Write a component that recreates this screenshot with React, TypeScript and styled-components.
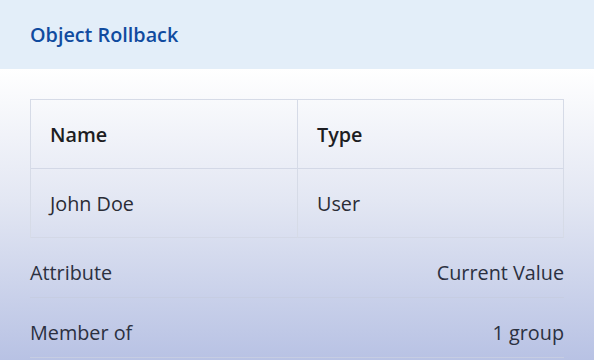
import React from 'react'
import styled, { createGlobalStyle } from 'styled-components'

const GlobalStyle = createGlobalStyle`
  *, *::before, *::after {
    box-sizing: border-box;
  }
  html, body {
    margin: 0;
    padding: 0;
    width: 594px;
    height: 360px;
    overflow: hidden;
  }
  body {
    font-family: "Open Sans", "Noto Sans", sans-serif;
  }
`

const Page = styled.div`
  width: 594px;
  height: 360px;
  display: flex;
  flex-direction: column;
  overflow: hidden;
`

const Header = styled.div`
  height: 69px;
  flex-shrink: 0;
  background: #e3eef9;
  display: flex;
  align-items: center;
  padding: 0 30px;
  h1 {
    margin: 0;
    font-size: 19.8px;
    font-weight: 600;
    color: #104b9f;
  }
`

const Body = styled.div`
  flex: 1;
  padding: 30px 30px 0;
  background: linear-gradient(180deg, #ffffff 0%, #e3e7f3 45%, #b8c2e4 100%);
`

const Table = styled.div`
  display: grid;
  grid-template-columns: 267px 1fr;
  border-top: 1px solid #d6dbe7;
  border-left: 1px solid #d6dbe7;
`

const Cell = styled.div<{ $head?: boolean }>`
  height: 69px;
  display: flex;
  align-items: center;
  padding-left: 19px;
  border-right: 1px solid #d6dbe7;
  border-bottom: 1px solid #d3d8e6;
  font-size: 19.8px;
  font-weight: ${p => (p.$head ? 600 : 400)};
  color: ${p => (p.$head ? '#1d1d22' : '#2a2c35')};
`

const InfoRow = styled.div`
  height: 60px;
  display: flex;
  justify-content: space-between;
  align-items: center;
  padding-top: 10px;
  border-bottom: 1px solid #c6cde2;
  font-size: 19.8px;
  color: #2b3040;
`

export default function App() {
  const rows = [
    { label: 'Attribute', value: 'Current Value' },
    { label: 'Member of', value: '1 group' },
  ]
  return (
    <Page>
      <GlobalStyle />
      <Header>
        <h1>Object Rollback</h1>
      </Header>
      <Body>
        <Table>
          <Cell $head>Name</Cell>
          <Cell $head>Type</Cell>
          <Cell>John Doe</Cell>
          <Cell>User</Cell>
        </Table>
        {rows.map(r => (
          <InfoRow key={r.label}>
            <span>{r.label}</span>
            <span>{r.value}</span>
          </InfoRow>
        ))}
      </Body>
    </Page>
  )
}
